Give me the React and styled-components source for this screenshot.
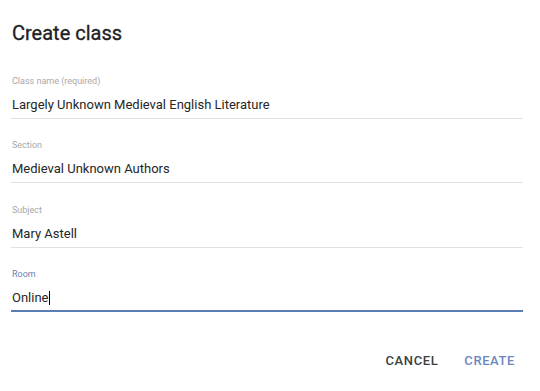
import React from "react";
import styled, { createGlobalStyle } from "styled-components";

const Global = createGlobalStyle`
  html, body { margin: 0; padding: 0; background: #ffffff; }
  body { font-family: Roboto, "Noto Sans", Arial, sans-serif; }
`;

const Dialog = styled.div`
  width: 540px;
  height: 391px;
  box-sizing: border-box;
  padding: 21px 17px 0 11px;
  display: flex;
  flex-direction: column;
  background: #fff;
`;

const Title = styled.h1`
  margin: 0 0 30px 0;
  font-size: 20px;
  line-height: 24px;
  font-weight: 400;
  color: #202124;
  padding-left: 1px;
  -webkit-text-stroke: 0.3px #202124;
`;

const Fields = styled.div`
  display: flex;
  flex-direction: column;
  gap: 20.3px;
`;

const Field = styled.div`
  display: flex;
  flex-direction: column;
  padding-bottom: ${(p) => (p.$focused ? "4px" : "5px")};
  border-bottom: ${(p) => (p.$focused ? "2px solid #5b7db5" : "1px solid #e2e2e2")};
`;

const Label = styled.label`
  font-size: 9px;
  line-height: 12px;
  color: ${(p) => (p.$focused ? "#6a82b3" : "#a8a8a8")};
  padding-left: 1px;
`;

const Value = styled.div`
  margin-top: 10px;
  font-size: 13px;
  line-height: 16px;
  color: #262626;
  padding-left: 1px;
  display: flex;
  align-items: center;
`;

const Caret = styled.span`
  display: inline-block;
  width: 1px;
  height: 14px;
  background: #000;
`;

const Actions = styled.div`
  margin-top: 33px;
  display: flex;
  justify-content: flex-end;
  gap: 10px;
`;

const Button = styled.button`
  border: none;
  background: transparent;
  padding: 8px;
  font-family: Roboto, Arial, sans-serif;
  font-size: 13px;
  line-height: 16px;
  font-weight: 500;
  letter-spacing: 0.6px;
  text-transform: uppercase;
  color: ${(p) => (p.$primary ? "#6d87c2" : "#3c4043")};
  cursor: pointer;
`;

const fields = [
  { label: "Class name (required)", value: "Largely Unknown Medieval English Literature" },
  { label: "Section", value: "Medieval Unknown Authors" },
  { label: "Subject", value: "Mary Astell" },
  { label: "Room", value: "Online", focused: true },
];

export default function App() {
  return (
    <>
      <Global />
      <Dialog>
        <Title>Create class</Title>
        <Fields>
          {fields.map((f) => (
            <Field key={f.label} $focused={f.focused}>
              <Label $focused={f.focused}>{f.label}</Label>
              <Value>
                {f.value}
                {f.focused && <Caret />}
              </Value>
            </Field>
          ))}
        </Fields>
        <Actions>
          <Button>Cancel</Button>
          <Button $primary>Create</Button>
        </Actions>
      </Dialog>
    </>
  );
}
